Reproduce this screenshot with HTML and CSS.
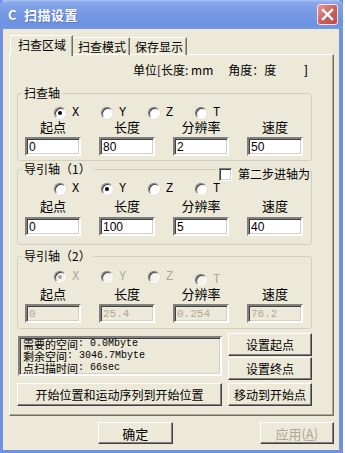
FILE: index.html
```html
<!DOCTYPE html>
<html lang="zh-CN">
<head>
    <meta charset="UTF-8">
    <title>扫描设置</title>
    <link rel="stylesheet" href="styles.css">
</head>
<body>
    <div class="window">
        <div class="titlebar">
            <span class="title">C&nbsp;&nbsp;扫描设置</span>
            <span class="close-btn">
                <svg width="13" height="13" viewBox="0 0 13 13"><path d="M2 2 L11 11 M11 2 L2 11" stroke="#fff" stroke-width="2.4" stroke-linecap="square"/></svg>
            </span>
        </div>

        <div class="client">
            <div class="tabs">
                <div class="tab active">扫查区域</div>
                <div class="tab">扫查模式</div>
                <div class="tab">保存显示</div>
            </div>

            <div class="panel">
                <div class="units">
                    <span>单位[长度: mm</span>
                    <span class="units-angle">角度：度</span>
                    <span class="units-end">]</span>
                </div>

                <!-- 扫查轴 -->
                <fieldset class="group group-scan">
                    <legend>扫查轴</legend>
                    <div class="radios">
                        <span class="radio"><span class="radio-dot checked"></span>X</span>
                        <span class="radio"><span class="radio-dot"></span>Y</span>
                        <span class="radio"><span class="radio-dot"></span>Z</span>
                        <span class="radio"><span class="radio-dot"></span>T</span>
                    </div>
                    <div class="fields">
                        <div class="field"><span class="field-label">起点</span><input class="edit" value="0" readonly></div>
                        <div class="field"><span class="field-label">长度</span><input class="edit" value="80" readonly></div>
                        <div class="field"><span class="field-label">分辨率</span><input class="edit" value="2" readonly></div>
                        <div class="field"><span class="field-label">速度</span><input class="edit" value="50" readonly></div>
                    </div>
                </fieldset>

                <!-- 导引轴 1 -->
                <fieldset class="group group-guide1">
                    <legend>导引轴（1）</legend>
                    <span class="step-check"><span class="checkbox"></span>第二步进轴为</span>
                    <div class="radios">
                        <span class="radio"><span class="radio-dot"></span>X</span>
                        <span class="radio"><span class="radio-dot checked"></span>Y</span>
                        <span class="radio"><span class="radio-dot"></span>Z</span>
                        <span class="radio"><span class="radio-dot"></span>T</span>
                    </div>
                    <div class="fields">
                        <div class="field"><span class="field-label">起点</span><input class="edit" value="0" readonly></div>
                        <div class="field"><span class="field-label">长度</span><input class="edit" value="100" readonly></div>
                        <div class="field"><span class="field-label">分辨率</span><input class="edit" value="5" readonly></div>
                        <div class="field"><span class="field-label">速度</span><input class="edit" value="40" readonly></div>
                    </div>
                </fieldset>

                <!-- 导引轴 2 (disabled) -->
                <fieldset class="group group-guide2">
                    <legend>导引轴（2）</legend>
                    <div class="radios disabled">
                        <span class="radio"><span class="radio-dot checked"></span>X</span>
                        <span class="radio"><span class="radio-dot"></span>Y</span>
                        <span class="radio"><span class="radio-dot"></span>Z</span>
                        <span class="radio radio-low"><span class="radio-dot"></span>T</span>
                    </div>
                    <div class="fields">
                        <div class="field"><span class="field-label">起点</span><input class="edit" value="0" disabled></div>
                        <div class="field"><span class="field-label">长度</span><input class="edit" value="25.4" disabled></div>
                        <div class="field"><span class="field-label">分辨率</span><input class="edit" value="0.254" disabled></div>
                        <div class="field"><span class="field-label">速度</span><input class="edit" value="76.2" disabled></div>
                    </div>
                </fieldset>

                <div class="actions">
                    <div class="info-box">
                        <div class="info-line">需要的空间<span class="mono">: 0.0Mbyte</span></div>
                        <div class="info-line">剩余空间<span class="mono">: 3046.7Mbyte</span></div>
                        <div class="info-line">点扫描时间<span class="mono">: 66sec</span></div>
                    </div>
                    <div class="side-buttons">
                        <button class="btn">设置起点</button>
                        <button class="btn">设置终点</button>
                    </div>
                    <button class="btn btn-long">开始位置和运动序列到开始位置</button>
                    <button class="btn">移动到开始点</button>
                </div>
            </div>

            <div class="footer">
                <button class="btn btn-ok">确定</button>
                <button class="btn btn-apply" disabled>应用(<u>A</u>)</button>
            </div>
        </div>
    </div>
</body>
</html>
```

FILE: styles.css
```css
body {
    margin: 0;
    background: #fff;
    font-family: "Noto Sans CJK SC", "DejaVu Sans", sans-serif;
    font-size: 12px;
    color: #000;
}
.window {
    width: 343px;
    height: 453px;
    box-sizing: border-box;
    background: #ece9d8;
    border: solid #6f91e2;
    border-width: 0 4px 3px 3px;
    display: flex;
    flex-direction: column;
}

/* title bar */
.titlebar {
    height: 29px;
    margin: 0 -4px 0 -3px;
    padding: 0 4px 0 8px;
    display: flex;
    align-items: center;
    justify-content: space-between;
    background: linear-gradient(#a8c0f2 0, #86a6ea 3px, #7699e5 45%, #6d91e2 85%, #7698e4 100%);
    border-radius: 6px 6px 0 0;
}
.title {
    color: #fff;
    font-weight: bold;
    font-size: 13px;
    letter-spacing: 0.5px;
    text-shadow: 1px 1px 0 #5a78c8;
}
.close-btn {
    width: 19px;
    height: 19px;
    margin-right: 1px;
    border: 1px solid #f4e6e6;
    border-radius: 3px;
    background: linear-gradient(135deg, #e59a92, #cc5e5a 55%, #b64a4a);
    display: flex;
    align-items: center;
    justify-content: center;
}

/* client area */
.client {
    flex: 1;
    padding: 6px 5px 0 6px;
    display: flex;
    flex-direction: column;
}
.tabs {
    display: flex;
    align-items: flex-start;
    height: 20px;
    padding-left: 1px;
    position: relative;
    z-index: 1;
}
.tab {
    height: 16px;
    margin-top: 2px;
    padding: 1px 3px 0 5px;
    line-height: 16px;
    border-top: 1px solid #fff;
    border-right: 1px solid #716f64;
    box-shadow: inset -1px 0 #aca899;
    white-space: nowrap;
}
.tab.active {
    height: 20px;
    margin-top: 0;
    padding: 0 6px 0 7px;
    line-height: 17px;
    border-left: 1px solid #fff;
    background: #ece9d8;
}
.panel {
    margin-top: -1px;
    padding: 8px 21px 9px 7px;
    border: 1px solid;
    border-color: #fff #716f64 #716f64 #fff;
    box-shadow: inset -1px -1px #aca899;
}
.units {
    display: flex;
    height: 14px;
    line-height: 14px;
    padding-left: 116px;
    white-space: nowrap;
}
.units span {
    flex-shrink: 0;
}
.units-angle {
    margin-left: 15px;
}
.units-end {
    margin-left: 28px;
    font-family: "Liberation Sans", sans-serif;
}

/* group boxes */
.group {
    margin: 0;
    padding: 6px 7px 4px 7px;
    border: 1px solid #d0d0bf;
    border-radius: 3px;
    position: relative;
}
.group legend {
    margin-left: -3px;
    padding: 0 2px;
    line-height: 14px;
    font-size: 12px;
}
.group-scan {
    margin-top: 9px;
}
.group-guide1 {
    margin-top: 1px;
    padding-bottom: 8px;
}
.group-guide2 {
    margin-top: 4px;
    padding-top: 7px;
    padding-bottom: 5px;
}
.step-check {
    position: absolute;
    top: -9px;
    right: 1px;
    display: flex;
    align-items: center;
    gap: 6px;
    padding-left: 2px;
    line-height: 14px;
    font-size: 12px;
    background: #ece9d8;
}
.checkbox {
    width: 11px;
    height: 11px;
    background: #fff;
    border: 1px solid;
    border-color: #808080 #fff #fff #808080;
    box-shadow: inset 1px 1px #404040, inset -1px -1px #d4d0c8;
}

.radios {
    display: flex;
    align-items: flex-start;
    height: 14px;
    padding-left: 29px;
}
.radio {
    width: 47px;
    display: flex;
    align-items: center;
    gap: 6px;
    line-height: 14px;
    font-family: "Liberation Mono", monospace;
    font-size: 12px;
}
.radio-dot {
    width: 10px;
    height: 10px;
    border-radius: 50%;
    background: #fff;
    border: 1px solid;
    border-color: #808080 #fff #fff #808080;
    box-shadow: inset 1px 1px #404040, 0 0 0 0.5px #d4d0c8;
    display: flex;
    align-items: center;
    justify-content: center;
}
.radio-dot.checked::after {
    content: '';
    width: 4px;
    height: 4px;
    border-radius: 50%;
    background: #000;
}
.radios.disabled .radio {
    color: #aca899;
}
.radios.disabled .radio-dot {
    background: #f4f3ee;
}
.radios.disabled .radio-dot.checked::after {
    background: #aca899;
}
.radio-low {
    margin-top: 3px;
}

.fields {
    display: grid;
    grid-template-columns: repeat(4, 56px);
    column-gap: 18px;
    margin-top: 3px;
}
.group-scan .fields {
    margin-top: 0;
}
.field {
    display: flex;
    flex-direction: column;
    align-items: center;
}
.field-label {
    line-height: 14px;
    font-size: 13px;
}
.edit {
    width: 56px;
    height: 19px;
    margin-top: 3px;
    box-sizing: border-box;
    padding: 1px 2px 0;
    border: 2px solid;
    border-color: #808080 #fff #fff #808080;
    box-shadow: inset 1px 1px #404040, inset -1px -1px #d4d0c8;
    background: #fff;
    font-family: "Liberation Sans", sans-serif;
    font-size: 12px;
    color: #000;
    outline: none;
}
.group-guide1 .edit {
    margin-top: 4px;
}
.edit:disabled {
    background: #ece9d8;
    color: #aca899;
    font-family: "Liberation Mono", monospace;
    font-size: 11px;
}

/* bottom area */
.actions {
    display: grid;
    grid-template-columns: 205px 84px;
    column-gap: 6px;
    row-gap: 3px;
    margin-top: 4px;
}
.info-box {
    margin: 3px 0 0 1px;
    height: 40px;
    box-sizing: border-box;
    padding: 0 3px;
    border: 2px solid;
    border-color: #808080 #fff #fff #808080;
    box-shadow: inset 1px 1px #404040, inset -1px -1px #d4d0c8;
    font-size: 11px;
    white-space: nowrap;
    overflow: hidden;
}
.info-line {
    display: flex;
    align-items: center;
    height: 12px;
    line-height: 12px;
}
.mono {
    font-family: "Liberation Mono", monospace;
    font-size: 10px;
}
.side-buttons {
    display: flex;
    flex-direction: column;
    gap: 1px;
}
.btn {
    height: 23px;
    padding: 0;
    font-family: "Noto Sans CJK SC", sans-serif;
    font-size: 12px;
    color: #000;
    background: #ece9d8;
    border: 1px solid;
    border-color: #fff #404040 #404040 #fff;
    box-shadow: inset -1px -1px #808080;
}
.footer {
    display: flex;
    margin-top: 6px;
}
.btn-ok {
    width: 75px;
    height: 22px;
    margin-left: 89px;
    font-size: 13px;
}
.btn-apply {
    width: 75px;
    height: 22px;
    margin-left: 87px;
    color: #aca899;
    font-size: 13px;
}
```
